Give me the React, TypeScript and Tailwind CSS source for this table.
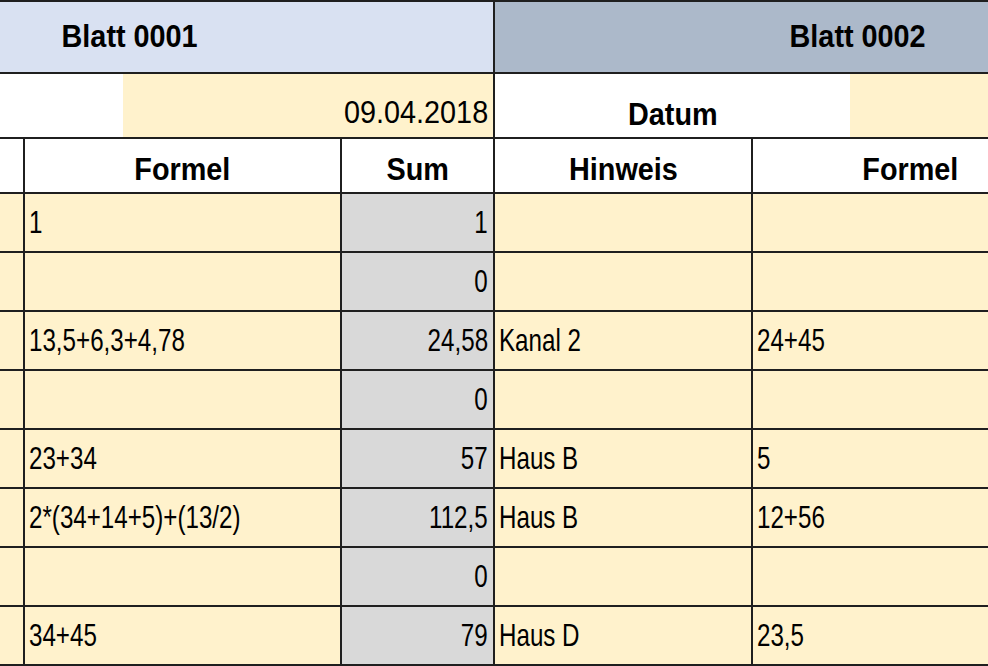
import React from "react";

type Row = {
  formula1: string;
  sum1: string;
  hint2: string;
  formula2: string;
};

const rows: Row[] = [
  { formula1: "1", sum1: "1", hint2: "", formula2: "" },
  { formula1: "", sum1: "0", hint2: "", formula2: "" },
  { formula1: "13,5+6,3+4,78", sum1: "24,58", hint2: "Kanal 2", formula2: "24+45" },
  { formula1: "", sum1: "0", hint2: "", formula2: "" },
  { formula1: "23+34", sum1: "57", hint2: "Haus B", formula2: "5" },
  { formula1: "2*(34+14+5)+(13/2)", sum1: "112,5", hint2: "Haus B", formula2: "12+56" },
  { formula1: "", sum1: "0", hint2: "", formula2: "" },
  { formula1: "34+45", sum1: "79", hint2: "Haus D", formula2: "23,5" },
];

// header text (Arial-like, slightly condensed to match the zoomed sheet)
function Head({ children }: { children: React.ReactNode }) {
  return <span className="inline-block scale-x-[0.9] whitespace-nowrap font-bold">{children}</span>;
}

function TextCell({ value }: { value: string }) {
  return (
    <div className="flex items-end bg-[#fff2cc] pb-[13px] pl-[4px]">
      {value && <span className="inline-block origin-left scale-x-[0.755] whitespace-nowrap">{value}</span>}
    </div>
  );
}

function SumCell({ value }: { value: string }) {
  return (
    <div className="flex items-end justify-end bg-[#d9d9d9] pb-[13px] pr-[5px]">
      {value && <span className="inline-block origin-right scale-x-[0.755] whitespace-nowrap">{value}</span>}
    </div>
  );
}

export default function App() {
  // columns off the left / right edge of the window are kept as empty cells
  const headers = ["", "Formel", "Sum", "Hinweis", "Formel", ""];

  return (
    <div className="h-[666px] w-full overflow-hidden bg-white font-['Liberation_Sans',Arial,sans-serif] text-[32px] leading-none text-black">
      <div className="-ml-[233px] grid w-max grid-cols-[256px_315px_151px_256px_315px_151px] grid-rows-[70px_63px_53px_repeat(8,57px)] gap-[2px] bg-[#1f1f1f] py-[2px]">
        {/* sheet titles */}
        <div className="col-span-3 flex items-center justify-center bg-[#d9e1f2] pb-[3px]">
          <Head>Blatt 0001</Head>
        </div>
        <div className="col-span-3 flex items-center justify-center bg-[#acb9ca] pb-[3px]">
          <Head>Blatt 0002</Head>
        </div>

        {/* date row */}
        <div className="col-span-3 flex">
          <div className="w-[356px] bg-white" />
          <div className="flex flex-1 items-end justify-end bg-[#fff2cc] pb-[9px] pr-[5px]">
            <span className="inline-block origin-right scale-x-[0.9]">09.04.2018</span>
          </div>
        </div>
        <div className="col-span-3 flex">
          <div className="flex w-[355px] items-end justify-center bg-white pb-[7px]">
            <Head>Datum</Head>
          </div>
          <div className="flex-1 bg-[#fff2cc]" />
        </div>

        {/* column headers */}
        {headers.map((h, i) => (
          <div key={i} className="flex items-end justify-center bg-white pb-[7px]">
            {h && <Head>{h}</Head>}
          </div>
        ))}

        {/* data */}
        {rows.map((r, i) => (
          <React.Fragment key={i}>
            <TextCell value="" />
            <TextCell value={r.formula1} />
            <SumCell value={r.sum1} />
            <TextCell value={r.hint2} />
            <TextCell value={r.formula2} />
            <SumCell value="" />
          </React.Fragment>
        ))}
      </div>
    </div>
  );
}
